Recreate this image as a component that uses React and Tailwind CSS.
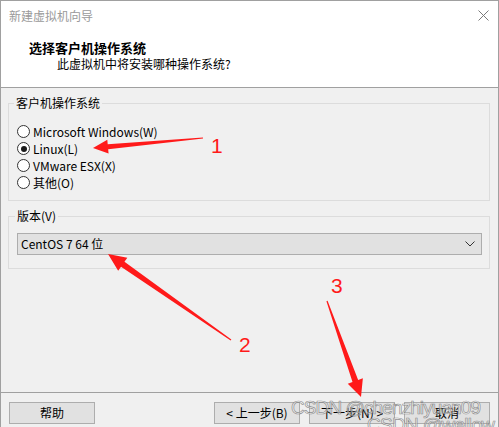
import React from 'react';

const FONT = { fontFamily: '"Noto Sans CJK SC", "Noto Sans", sans-serif' };

// tapered arrow polygon from tail to tip
function arrowPoints(tx, ty, px, py, headLen, headHalf, shaftHalf) {
  const dx = px - tx;
  const dy = py - ty;
  const len = Math.hypot(dx, dy);
  const ux = dx / len;
  const uy = dy / len;
  const nx = -uy;
  const ny = ux;
  const bx = px - ux * headLen;
  const by = py - uy * headLen;
  const pts = [
    [tx + nx * 0.6, ty + ny * 0.6],
    [bx + nx * shaftHalf, by + ny * shaftHalf],
    [bx + nx * headHalf, by + ny * headHalf],
    [px, py],
    [bx - nx * headHalf, by - ny * headHalf],
    [bx - nx * shaftHalf, by - ny * shaftHalf],
    [tx - nx * 0.6, ty - ny * 0.6],
  ];
  return pts.map((p) => p.join(',')).join(' ');
}

function Radio({ label, checked }) {
  return (
    <div className="h-[17px] flex items-center pl-[8px] gap-[3px]">
      <span className="w-[13px] h-[13px] rounded-full border border-[#333] bg-white flex items-center justify-center">
        {checked && <span className="w-[6px] h-[6px] rounded-full bg-[#1a1a1a]" />}
      </span>
      <span className="text-[12px] leading-[17px] text-black">{label}</span>
    </div>
  );
}

function Button({ children }) {
  return (
    <button className="w-[86px] h-[22px] bg-[#e1e1e1] border border-[#adadad] text-[12px] leading-[20px] text-black flex items-center justify-center">
      {children}
    </button>
  );
}

export default function App() {
  return (
    <div
      className="relative w-[499px] h-[427px] bg-[#f0f0f0] border-t border-l border-r border-[#a0a0a0] flex flex-col overflow-hidden"
      style={FONT}
    >
      {/* header */}
      <div className="h-[87px] bg-white border-b border-[#a0a0a0] flex flex-col">
        <div className="h-[29px] flex items-center justify-between pl-[8px] pr-[9px]">
          <span className="text-[12px] leading-[16px] text-[#9a9a9a]">新建虚拟机向导</span>
          <svg width="11" height="11" viewBox="0 0 11 11">
            <path d="M0.5 0.5 L10.5 10.5 M10.5 0.5 L0.5 10.5" stroke="#7a7a7a" strokeWidth="1" />
          </svg>
        </div>
        <div className="mt-[10px] pl-[28px] text-[13px] leading-[16px] font-bold text-black">选择客户机操作系统</div>
        <div className="pl-[56px] text-[12px] leading-[16px] text-black">此虚拟机中将安装哪种操作系统?</div>
      </div>

      {/* body */}
      <div className="flex-1 pt-[7px] pl-[7px] pr-[8px]">
        <fieldset className="border border-[#dcdcdc] pb-[9px]">
          <legend className="ml-[5px] px-[2px] text-[12px] leading-[16px] text-black">客户机操作系统</legend>
          <div className="pt-[12px] flex flex-col">
            <Radio label="Microsoft Windows(W)" />
            <Radio label="Linux(L)" checked />
            <Radio label="VMware ESX(X)" />
            <Radio label="其他(O)" />
          </div>
        </fieldset>

        <fieldset className="mt-[7px] border border-[#dcdcdc] pb-[13px]">
          <legend className="ml-[6px] px-[2px] text-[12px] leading-[16px] text-black">版本(V)</legend>
          <div className="mt-[9px] ml-[8px] mr-[7px] h-[22px] bg-[#e1e1e1] border border-[#adadad] flex items-center justify-between pl-[3px] pr-[6px]">
            <span className="text-[12px] leading-[20px] text-black">CentOS 7 64 位</span>
            <svg width="10" height="6" viewBox="0 0 10 6">
              <polyline points="0.5,0.5 5,5 9.5,0.5" fill="none" stroke="#333" strokeWidth="1" />
            </svg>
          </div>
        </fieldset>
      </div>

      {/* footer */}
      <div className="h-[35px] border-t border-[#a0a0a0] pt-[9px] pl-[8px] pr-[8px] flex items-start justify-between">
        <Button>帮助</Button>
        <div className="flex gap-[9px]">
          <Button>&lt; 上一步(B)</Button>
          <Button>下一步(N) &gt;</Button>
          <Button>取消</Button>
        </div>
      </div>

      {/* annotations overlay */}
      <svg className="absolute -top-px -left-px pointer-events-none" width="499" height="427" viewBox="0 0 499 427">
        <text
          x="291"
          y="414"
          textLength="190"
          fontSize="19"
          fontFamily="Liberation Sans, sans-serif"
          fill="rgba(255,255,255,0.55)"
          stroke="rgba(110,110,110,0.75)"
          strokeWidth="0.7"
        >
          CSDN @chenzhiyuan09
        </text>
        <text
          x="367"
          y="431"
          textLength="128"
          fontSize="19"
          fontFamily="Liberation Sans, sans-serif"
          fill="rgba(255,255,255,0.55)"
          stroke="rgba(110,110,110,0.75)"
          strokeWidth="0.7"
        >
          CSDN @wellow
        </text>
        <polygon points={arrowPoints(203, 138, 93, 148, 15, 7, 2.5)} fill="#ff1a1a" />
        <polygon points={arrowPoints(231, 340, 108, 254, 18, 8, 3)} fill="#ff1a1a" />
        <polygon points={arrowPoints(327, 301, 361, 397, 17, 8, 3)} fill="#ff1a1a" />
        <text x="211" y="153" fontSize="21" fontFamily="Liberation Sans, sans-serif" fill="#ff1a1a">1</text>
        <text x="239" y="352" fontSize="21" fontFamily="Liberation Sans, sans-serif" fill="#ff1a1a">2</text>
        <text x="331" y="293" fontSize="21" fontFamily="Liberation Sans, sans-serif" fill="#ff1a1a">3</text>
      </svg>
    </div>
  );
}
